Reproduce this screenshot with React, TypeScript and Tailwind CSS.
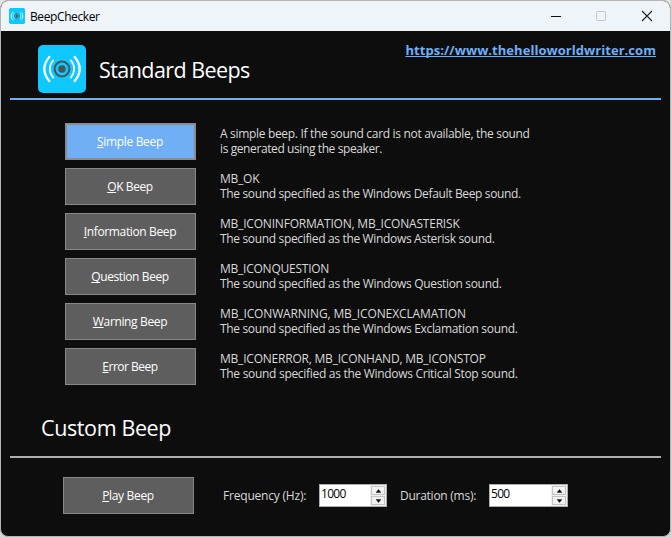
type Beep = {
  mnemonic: string;
  label: string;
  labelTracking: string;
  lines: { text: string; tracking: string }[];
  focused?: boolean;
};

const beeps: Beep[] = [
  {
    mnemonic: "S",
    label: "imple Beep",
    labelTracking: "tracking-[-0.34px]",
    focused: true,
    lines: [
      { text: "A simple beep. If the sound card is not available, the sound", tracking: "tracking-[-0.32px]" },
      { text: "is generated using the speaker.", tracking: "tracking-[-0.4px]" },
    ],
  },
  {
    mnemonic: "O",
    label: "K Beep",
    labelTracking: "tracking-[-0.4px]",
    lines: [
      { text: "MB_OK", tracking: "tracking-[-0.25px]" },
      { text: "The sound specified as the Windows Default Beep sound.", tracking: "tracking-[-0.348px]" },
    ],
  },
  {
    mnemonic: "I",
    label: "nformation Beep",
    labelTracking: "tracking-[-0.36px]",
    lines: [
      { text: "MB_ICONINFORMATION, MB_ICONASTERISK", tracking: "tracking-[-0.2px]" },
      { text: "The sound specified as the Windows Asterisk sound.", tracking: "tracking-[-0.34px]" },
    ],
  },
  {
    mnemonic: "Q",
    label: "uestion Beep",
    labelTracking: "tracking-[-0.4px]",
    lines: [
      { text: "MB_ICONQUESTION", tracking: "tracking-[-0.24px]" },
      { text: "The sound specified as the Windows Question sound.", tracking: "tracking-[-0.335px]" },
    ],
  },
  {
    mnemonic: "W",
    label: "arning Beep",
    labelTracking: "tracking-[-0.36px]",
    lines: [
      { text: "MB_ICONWARNING, MB_ICONEXCLAMATION", tracking: "tracking-[-0.13px]" },
      { text: "The sound specified as the Windows Exclamation sound.", tracking: "tracking-[-0.335px]" },
    ],
  },
  {
    mnemonic: "E",
    label: "rror Beep",
    labelTracking: "tracking-[-0.5px]",
    lines: [
      { text: "MB_ICONERROR, MB_ICONHAND, MB_ICONSTOP", tracking: "tracking-[-0.215px]" },
      { text: "The sound specified as the Windows Critical Stop sound.", tracking: "tracking-[-0.298px]" },
    ],
  },
];

function Logo({ className }: { className: string }) {
  return (
    <svg viewBox="0 0 48 48" className={className} fill="none">
      <rect width="48" height="48" rx="5" fill="#0fc8ff" />
      <circle cx="24" cy="24" r="7.4" stroke="#4a545a" strokeWidth="2" />
      <circle cx="24" cy="24" r="3.7" fill="#4a545a" />
      <g stroke="#fff">
        <path d="M15.6 14.8Q8 24 15.6 33.2M32.4 14.8Q40 24 32.4 33.2" strokeWidth="1.7" />
        <path d="M11.9 11.2Q0.7 24 11.9 36.8M36.1 11.2Q47.3 24 36.1 36.8" strokeWidth="2.3" />
      </g>
    </svg>
  );
}

function BeepButton({ mnemonic, label, tracking, focused }: { mnemonic: string; label: string; tracking: string; focused?: boolean }) {
  return (
    <button
      className={`flex h-[37px] w-[131px] shrink-0 items-center justify-center whitespace-nowrap pr-px text-white ${tracking} ${
        focused ? "border-2 border-[#8b8b8b] bg-[#70aef6]" : "border border-[#878787] bg-[#5e5e5e]"
      }`}
    >
      <span className="underline decoration-1 underline-offset-1 [text-decoration-skip-ink:none]">{mnemonic}</span>
      {label}
    </button>
  );
}

function SpinButton({ down }: { down?: boolean }) {
  return (
    <span className="flex h-[9px] w-[14px] items-center justify-center border border-[#c4c4c4] bg-[#f2f2f2]">
      <svg viewBox="0 0 5 4" className="h-1 w-[5px] shrink-0">
        <path d={down ? "M0 .5H5L2.5 3.5Z" : "M0 3.5H5L2.5 .5Z"} fill="#111" stroke="#111" strokeWidth=".4" />
      </svg>
    </span>
  );
}

function SpinBox({ value, width }: { value: string; width: string }) {
  return (
    <div className={`flex h-[23px] ${width} justify-between border border-[#abadb3] bg-white`}>
      <span className="pl-px pt-px leading-4 tracking-[-0.7px] text-black">{value}</span>
      <div className="flex w-4 flex-col items-center justify-center gap-px bg-[#f0f0f0]">
        <SpinButton />
        <SpinButton down />
      </div>
    </div>
  );
}

export default function App() {
  return (
    <div className="h-[537px] w-[671px] bg-gradient-to-b from-[#e6e6e6] to-[#d8d4d4] font-['Open_Sans','Noto_Sans',sans-serif] text-[12px] leading-[15px]">
      <div className="flex h-full flex-col overflow-hidden rounded-lg border border-[#b4b4b4] bg-[#0d0d0d] text-[#d9d9d9]">
        <header className="flex h-[30px] shrink-0 items-center bg-[#eff4f9] pl-2 text-black">
          <Logo className="h-4 w-4" />
          <span className="ml-[5px] tracking-[-0.4px]">BeepChecker</span>
          <svg viewBox="0 0 104 12" className="ml-auto mr-4 h-3 w-[104px]" fill="none">
            <path d="M1 6.5h10" stroke="#111" />
            <rect x="46.5" y="1.5" width="9" height="9" rx="1" stroke="#c0c3c7" />
            <path d="M92 1l10 10M102 1l-10 10" stroke="#222" strokeWidth="1.1" />
          </svg>
        </header>

        <section className="mx-[9px] flex h-[69px] shrink-0 border-b-2 border-[#70aef6] pl-7 pt-[14px]">
          <Logo className="h-12 w-12 shrink-0" />
          <h1 className="ml-[13px] pt-[10px] text-[21.5px] leading-[30px] tracking-[-0.56px] whitespace-nowrap text-white">Standard Beeps</h1>
          <a className="-mt-[3px] ml-auto mr-[5px] h-4 text-[13px] font-bold leading-4 tracking-[0.05px] text-[#70aef6] underline decoration-1 underline-offset-1 [text-decoration-skip-ink:none]">
            https://www.thehelloworldwriter.com
          </a>
        </section>

        <section className="flex flex-col gap-2 pl-16 pt-[23px]">
          {beeps.map((b) => (
            <div key={b.mnemonic} className="flex h-[37px] gap-6">
              <BeepButton mnemonic={b.mnemonic} label={b.label} tracking={b.labelTracking} focused={b.focused} />
              <div className="flex flex-col pt-[3px] whitespace-nowrap">
                {b.lines.map((l) => (
                  <span key={l.text} className={l.tracking}>
                    {l.text}
                  </span>
                ))}
              </div>
            </div>
          ))}
        </section>

        <section className="mx-[9px] h-[73px] shrink-0 border-b-2 border-[#aeaeae] pl-[31px] pt-[28px]">
          <h2 className="text-[21.5px] leading-[30px] tracking-[-0.38px] text-white">Custom Beep</h2>
        </section>

        <section className="flex items-center pl-[62px] pt-[19px] whitespace-nowrap">
          <BeepButton mnemonic="P" label="lay Beep" tracking="tracking-[-0.33px]" />
          <span className="ml-[29px] w-24 tracking-[-0.2px]">Frequency (Hz):</span>
          <SpinBox value="1000" width="w-[68px]" />
          <span className="ml-[13px] w-[89px] tracking-[-0.26px]">Duration (ms):</span>
          <SpinBox value="500" width="w-[79px]" />
        </section>
      </div>
    </div>
  );
}
